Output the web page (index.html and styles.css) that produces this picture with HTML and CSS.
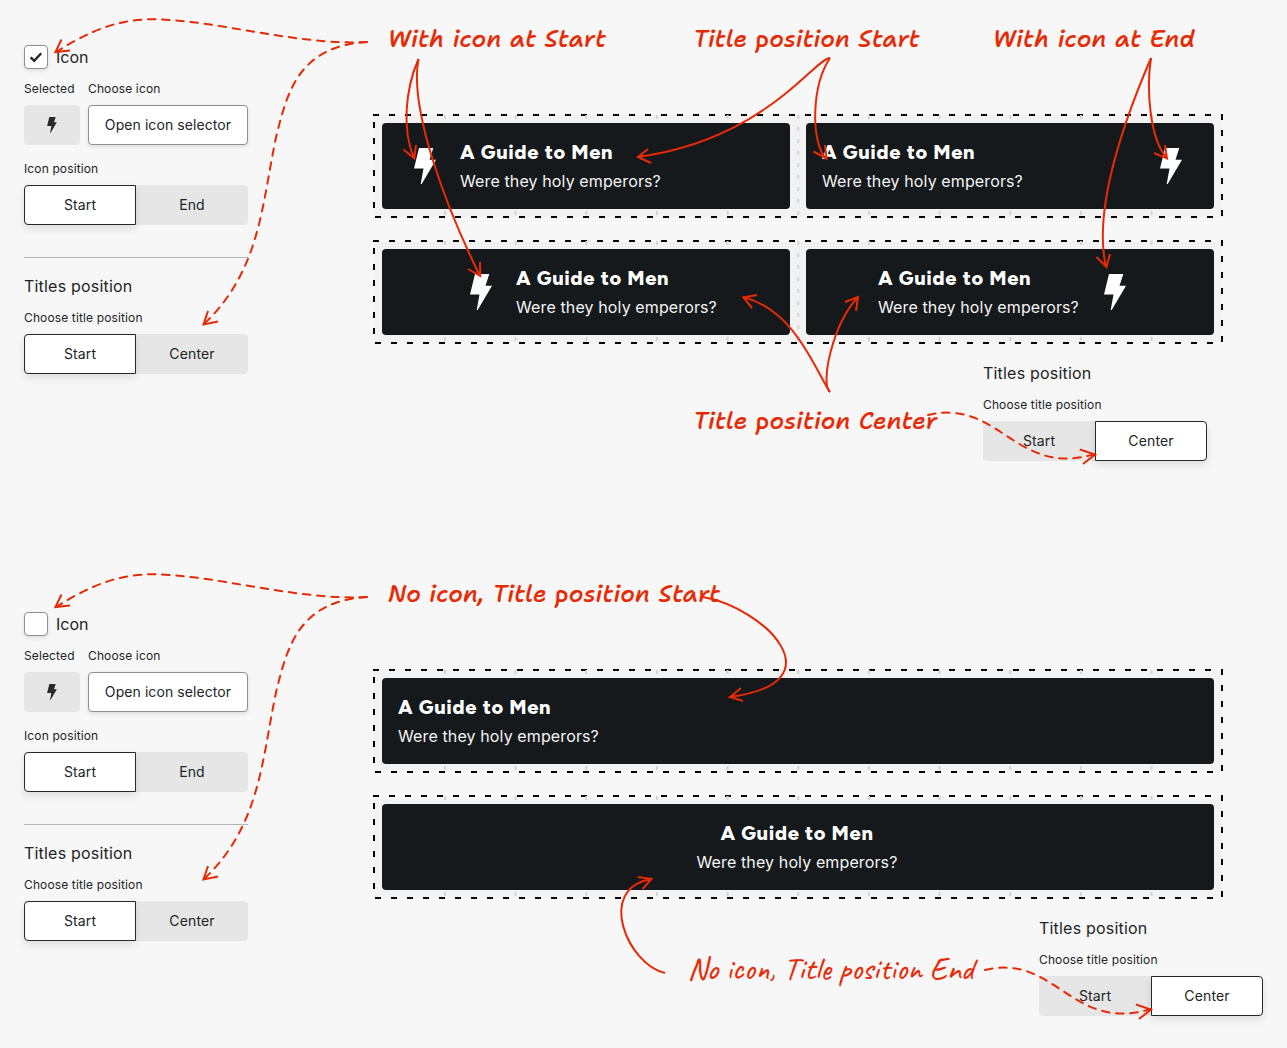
FILE: index.html
```html
<!DOCTYPE html>
<html lang="en">
<head>
<meta charset="utf-8">
<title>Title block options</title>
<link rel="stylesheet" href="styles.css">
</head>
<body>
<svg class="defs" width="0" height="0" aria-hidden="true">
  <symbol id="bolt" viewBox="0 0 22 36"><path d="M5 0H19.3L15.5 11.8H22L7.7 36H6.7L9.5 20.4H0Z"/></symbol>
</svg>

<section class="scene">
  <aside class="panel">
    <label class="check"><span class="box"><svg width="14" height="12" viewBox="0 0 14 12"><path d="M1.6 6.3 5.2 9.7 12.2 2.2"/></svg></span>Icon</label>
    <div class="pick">
      <div class="field"><span class="caption">Selected</span><div class="chosen"><svg width="10" height="16"><use href="#bolt"/></svg></div></div>
      <div class="field grow"><span class="caption">Choose icon</span><button class="open">Open icon selector</button></div>
    </div>
    <div class="field"><span class="caption">Icon position</span><div class="seg"><button class="on">Start</button><button>End</button></div></div>
    <hr>
    <div class="option"><h2>Titles position</h2><div class="field"><span class="caption">Choose title position</span><div class="seg"><button class="on">Start</button><button>Center</button></div></div></div>
  </aside>
  <main class="preview">
    <div class="frame">
      <article class="card"><span class="icon"><svg><use href="#bolt"/></svg></span><div class="titles"><h3>A Guide to Men</h3><p>Were they holy emperors?</p></div></article>
      <article class="card spread"><div class="titles"><h3>A Guide to Men</h3><p>Were they holy emperors?</p></div><span class="icon"><svg><use href="#bolt"/></svg></span></article>
    </div>
    <div class="frame">
      <article class="card center"><span class="icon"><svg><use href="#bolt"/></svg></span><div class="titles"><h3>A Guide to Men</h3><p>Were they holy emperors?</p></div></article>
      <article class="card center"><div class="titles"><h3>A Guide to Men</h3><p>Were they holy emperors?</p></div><span class="icon"><svg><use href="#bolt"/></svg></span></article>
    </div>
    <div class="option aside-option"><h2>Titles position</h2><div class="field"><span class="caption">Choose title position</span><div class="seg"><button>Start</button><button class="on">Center</button></div></div></div>
  </main>
</section>

<section class="scene second">
  <aside class="panel">
    <label class="check"><span class="box"></span>Icon</label>
    <div class="pick">
      <div class="field"><span class="caption">Selected</span><div class="chosen"><svg width="10" height="16"><use href="#bolt"/></svg></div></div>
      <div class="field grow"><span class="caption">Choose icon</span><button class="open">Open icon selector</button></div>
    </div>
    <div class="field"><span class="caption">Icon position</span><div class="seg"><button class="on">Start</button><button>End</button></div></div>
    <hr>
    <div class="option"><h2>Titles position</h2><div class="field"><span class="caption">Choose title position</span><div class="seg"><button class="on">Start</button><button>Center</button></div></div></div>
  </aside>
  <main class="preview">
    <div class="frame">
      <article class="card"><div class="titles"><h3>A Guide to Men</h3><p>Were they holy emperors?</p></div></article>
    </div>
    <div class="frame">
      <article class="card center"><div class="titles middle"><h3>A Guide to Men</h3><p>Were they holy emperors?</p></div></article>
    </div>
    <div class="option aside-option"><h2>Titles position</h2><div class="field"><span class="caption">Choose title position</span><div class="seg"><button>Start</button><button class="on">Center</button></div></div></div>
  </main>
</section>

<svg class="notes" width="1287" height="1048" viewBox="0 0 1287 1048">
  <g class="dashed">
    <path d="M367 42C300 46 215 20 155 19.3C115 18.5 85 34 56 52"/>
    <path d="M367 42C300 46 288 90 277 133C262 200 262 270 203 325"/>
    <path d="M367 597C300 601 215 575 155 574.3C115 573.5 85 589 56 607"/>
    <path d="M367 597C300 601 288 645 277 688C262 755 262 825 203 880"/>
    <path d="M928 415C1000 398 1015 478 1095 454"/>
    <path d="M985 970C1056 953 1071 1033 1151 1009"/>
  </g>
  <g class="solid">
    <path d="M61.5 39.5 55.5 52 70 50.5"/>
    <path d="M208 311 203.5 324.5 218 321.5"/>
    <path d="M61.5 594.5 55.5 607 70 605.5"/>
    <path d="M208 866 203.5 879.5 218 876.5"/>
    <path d="M1080 449.5 1095 454.5 1083 464"/>
    <path d="M1136 1004.5 1151 1009.5 1139 1019"/>
    <path d="M418.5 59C405 90 402 130 414 158M403.5 149.5 414.3 158.3 416 145"/>
    <path d="M418.5 59C409 108 445 205 480 276M468 269 480.3 276 480 262"/>
    <path d="M830 58C815 58 765 140 637 157M648 149 638 157 651 163"/>
    <path d="M830 58C812 85 810 140 826 159M813.5 151.5 826.5 158.5 825 145"/>
    <path d="M1151 58C1146 90 1150 140 1167 158M1154 153 1167 158.5 1165 145"/>
    <path d="M1151 58C1118 135 1094 215 1106 267M1096.5 257 1106.5 267 1110 254"/>
    <path d="M830 392C815 370 795 310 743 297M757 295 743.5 297.5 752 308"/>
    <path d="M830 392C820 385 832 325 858 297M845 302 858 297 856 311"/>
    <path d="M703 597C765 608 840 683 729 697M741 688 730 697 743 701"/>
    <path d="M665 973C628 965 595 888 652 879M638 877 651.5 879 642.5 889"/>
  </g>
  <g class="writing">
    <text x="388" y="47" textLength="218">With icon at Start</text>
    <text x="693.5" y="47" textLength="226">Title position Start</text>
    <text x="993" y="47" textLength="202">With icon at End</text>
    <text x="693.5" y="429" textLength="244">Title position Center</text>
    <text x="388" y="602" textLength="332">No icon, Title position Start</text>
    <text class="narrow" x="687.5" y="978.5" textLength="286">No icon, Title position End</text>
  </g>
</svg>
</body>
</html>
```

FILE: styles.css
```css
* { box-sizing: border-box; }
html { overflow: hidden; }
body {
  margin: 0;
  position: relative;
  width: 1287px;
  height: 1048px;
  overflow: hidden;
  background: #f7f7f7;
  color: #222425;
  font-family: Inter, "Liberation Sans", sans-serif;
  letter-spacing: 0.13px;
}
h2, h3, p { margin: 0; font-weight: 400; }
button { font: inherit; letter-spacing: inherit; color: inherit; padding: 0 0 2px; border: 0; }
.defs { position: absolute; }

.scene { display: flex; height: 555px; }
.scene.second { height: 493px; }
.panel { width: 248px; padding: 45px 0 0 24px; display: flex; flex-direction: column; }
.second .panel { padding-top: 57px; }
.check { display: flex; align-items: center; gap: 8px; height: 24px; font-size: 16px; letter-spacing: 0; margin-bottom: 12px; }
.box {
  width: 24px; height: 24px;
  display: grid; place-items: center;
  border: 1px solid #8d8e8f; border-radius: 4px;
  background: #fff;
  box-shadow: 0 2px 4px rgba(0, 0, 0, .1);
}
.box path { fill: none; stroke: #28292b; stroke-width: 2.4; }
.pick { display: flex; gap: 8px; margin-bottom: 16px; }
.field { display: flex; flex-direction: column; gap: 8px; }
.grow { flex: 1; }
.caption { font-size: 12px; line-height: 16px; white-space: nowrap; }
.chosen { width: 56px; height: 40px; display: grid; place-items: center; background: #e6e6e6; border-radius: 4px; }
.chosen svg { fill: #28292b; }
.open {
  height: 40px; font-size: 14px; letter-spacing: .08px;
  background: #fff; border: 1px solid #8d8e8f; border-radius: 4px;
  box-shadow: 0 2px 4px rgba(0, 0, 0, .1);
}
.pick .field:first-child { width: 56px; }
.seg { display: flex; width: 224px; height: 40px; background: #e6e6e6; border-radius: 4px; font-size: 14px; }
.seg button { width: 112px; background: none; }
.seg .on { background: #fff; border: 1px solid #28292b; box-shadow: 0 4px 8px rgba(0, 0, 0, .1); }
.seg .on:first-child { border-radius: 4px 0 0 4px; }
.seg .on:last-child { border-radius: 0 4px 4px 0; }
hr { width: 224px; height: 1px; margin: 32px 0 16px; border: 0; background: #b4b5b6; }
.option { display: flex; flex-direction: column; gap: 12px; }
.option h2 { font-size: 16px; line-height: 24px; letter-spacing: .2px; }

.preview { width: 850px; margin-left: 125px; padding-top: 114px; display: flex; flex-direction: column; gap: 22px; }
.frame {
  position: relative;
  height: 104px; flex: none;
  padding: 9px;
  display: flex; gap: 16px;
  background:
    repeating-linear-gradient(90deg, #000 0 6px, transparent 6px 16px) 0 0 / 850px 2px no-repeat,
    repeating-linear-gradient(90deg, #000 0 6px, transparent 6px 16px) 2px 100% / 846px 2px no-repeat,
    repeating-linear-gradient(#000 0 6px, transparent 6px 16px) 0 8px / 2px 88px no-repeat,
    repeating-linear-gradient(#000 0 6px, transparent 6px 16px) 100% 0 / 2px 104px no-repeat,
    linear-gradient(#f2f2f2, #f2f2f2) 1px 1px / 848px 102px no-repeat;
}
.frame::before {
  content: "";
  position: absolute;
  inset: 1px;
  background: linear-gradient(90deg, #d4d4d4 1.5px, transparent 1.5px) 70px 0 / 70.667px 100%;
  clip-path: inset(0 8px);
  -webkit-mask: repeating-linear-gradient(#000 0 4px, transparent 4px 12px);
  mask: repeating-linear-gradient(#000 0 4px, transparent 4px 12px);
}
.card {
  position: relative;
  flex: 1;
  display: flex; align-items: center; gap: 8px;
  padding: 16px;
  background: #15191c;
  border-radius: 4px;
  color: #fff;
}
.card.spread { justify-content: space-between; }
.card.center { justify-content: center; }
.icon { width: 54px; height: 54px; display: grid; place-items: center; flex: none; }
.icon svg { width: 22px; height: 36px; fill: #fff; }
.titles { display: flex; flex-direction: column; gap: 4px; width: 202px; white-space: nowrap; }
.titles h3 { font: 800 20px/26px Figtree, Lato, sans-serif; letter-spacing: .72px; }
.titles p { font-size: 16px; line-height: 24px; letter-spacing: .12px; color: #f4f4f4; }
.titles.middle { align-items: center; padding-right: 2px; }

.aside-option { margin: -5px 0 0 610px; }
.second .aside-option { margin-left: 666px; }

.notes { position: absolute; left: 0; top: 0; }
.notes path { fill: none; stroke: #e52a05; stroke-width: 2; }
.dashed path { stroke-dasharray: 7.5 6.7; stroke-linecap: round; }
.writing text {
  font: italic 500 23.6px "Shantell Sans", "Playpen Sans", Lato, sans-serif;
  letter-spacing: 0;
  fill: #e52a05;
  stroke: #e52a05;
  stroke-width: .15px;
}
.writing .narrow { font: 500 32px Caveat, Lato, sans-serif; }
```
